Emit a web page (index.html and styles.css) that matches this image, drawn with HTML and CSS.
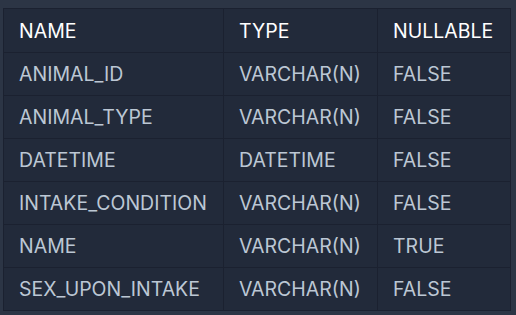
FILE: index.html
```html
<!DOCTYPE html>
<html lang="en">
<head>
  <meta charset="UTF-8" />
  <meta name="viewport" content="width=device-width, initial-scale=1.0" />
  <title>Animal intakes | Schema</title>
  <link rel="stylesheet" href="styles.css">
</head>
<body>
  <table class="schema">
    <colgroup>
      <col class="col-name">
      <col class="col-type">
      <col class="col-null">
    </colgroup>
    <thead>
      <tr><th>NAME</th><th>TYPE</th><th>NULLABLE</th></tr>
    </thead>
    <tbody>
      <tr><td>ANIMAL_ID</td><td>VARCHAR(N)</td><td>FALSE</td></tr>
      <tr><td>ANIMAL_TYPE</td><td>VARCHAR(N)</td><td>FALSE</td></tr>
      <tr><td>DATETIME</td><td>DATETIME</td><td>FALSE</td></tr>
      <tr><td>INTAKE_CONDITION</td><td>VARCHAR(N)</td><td>FALSE</td></tr>
      <tr><td>NAME</td><td>VARCHAR(N)</td><td>TRUE</td></tr>
      <tr><td>SEX_UPON_INTAKE</td><td>VARCHAR(N)</td><td>FALSE</td></tr>
    </tbody>
  </table>
</body>
</html>
```

FILE: styles.css
```css
* { box-sizing: border-box; }
body, html {
  margin: 0; padding: 0; height: 100%;
  background: #2c3545;
  font-family: 'Inter', 'Roboto', sans-serif;
}
body { padding: 8px 0 0 3px; }
.schema {
  border-collapse: collapse; table-layout: fixed;
  width: 507px; background: #222a3a;
  font-size: 19.5px;
}
.col-name { width: 220px; }
.col-type { width: 154px; }
.col-null { width: 133px; }
.schema th, .schema td {
  border: 1px solid #1b2130;
  padding: 0 0 0 15px; text-align: left; white-space: nowrap;
}
.schema th {
  height: 44px; color: #ffffff; font-weight: 400;
}
.schema td {
  height: 43px; color: #bcc7d4;
}
```
